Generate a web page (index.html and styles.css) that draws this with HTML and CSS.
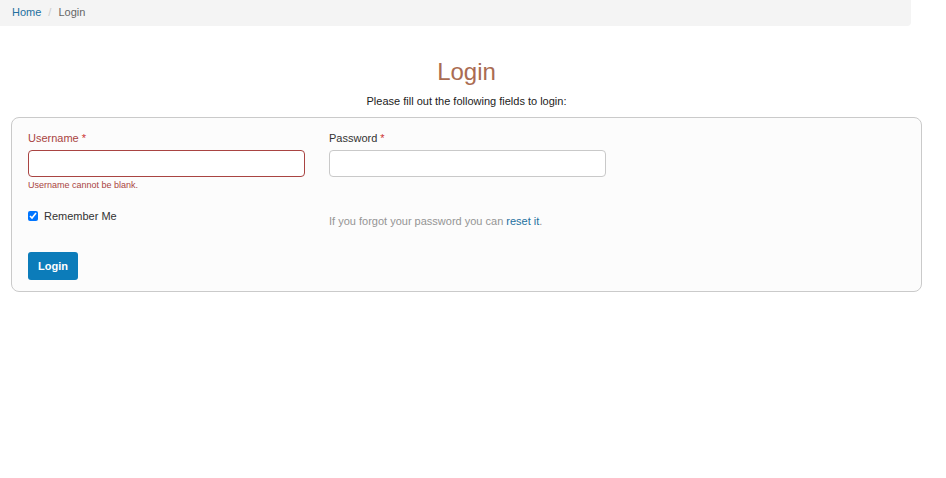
FILE: index.html
```html
<!DOCTYPE html>
<html lang="en">
<head>
    <meta charset="UTF-8">
    <title>Login</title>
    <link rel="stylesheet" href="styles.css">
</head>
<body>
    <ul class="breadcrumb">
        <li><a href="#">Home</a></li>
        <li class="active">Login</li>
    </ul>

    <div class="site-login">
        <h1>Login</h1>
        <p class="lead">Please fill out the following fields to login:</p>

        <form class="login-box">
            <div class="row">
                <div class="field has-error">
                    <label>Username <span class="req">*</span></label>
                    <input type="text">
                    <div class="help-block">Username cannot be blank.</div>
                </div>
                <div class="field">
                    <label>Password <span class="req">*</span></label>
                    <input type="password">
                </div>
            </div>
            <div class="row row-check">
                <div class="field">
                    <label class="check"><input type="checkbox" checked> Remember Me</label>
                </div>
                <div class="field">
                    <p class="forgot">If you forgot your password you can <a href="#">reset it</a>.</p>
                </div>
            </div>
            <button type="button" class="btn">Login</button>
        </form>
    </div>
</body>
</html>
```

FILE: styles.css
```css
body {
    font-family: 'Liberation Sans', Arial, sans-serif;
    font-size: 12px;
    color: #333;
    margin: 0;
    background: #fff;
}
a {
    color: #23709f;
    text-decoration: none;
}
.breadcrumb {
    list-style: none;
    margin: 0;
    padding: 5px 12px;
    width: 887px;
    height: 16px;
    background: #f4f4f4;
    border-bottom-right-radius: 4px;
    display: flex;
    font-size: 11px;
    line-height: 14px;
}
.breadcrumb li + li::before {
    content: "/";
    color: #ccc;
    padding: 0 7px;
}
.breadcrumb .active {
    color: #666;
}
.site-login {
    padding: 0 24px 0 11px;
}
.site-login h1 {
    margin: 32px 0 0;
    text-align: center;
    font-weight: normal;
    font-size: 24px;
    line-height: 28px;
    color: #aa6c52;
}
.lead {
    margin: 8px 0 0;
    text-align: center;
    font-size: 11px;
    line-height: 14px;
    color: #222;
}
.login-box {
    margin-top: 9px;
    border: 1px solid #cacaca;
    border-radius: 8px;
    background: #fcfcfc;
    padding: 13px 16px 11px;
}
.row {
    display: flex;
    gap: 24px;
}
.field {
    width: 277px;
}
.field label {
    display: block;
    font-size: 11px;
    line-height: 14px;
    color: #333;
    margin-bottom: 5px;
}
.req {
    color: #c33;
}
.field input[type=text],
.field input[type=password] {
    display: block;
    box-sizing: border-box;
    width: 277px;
    height: 27px;
    margin: 0;
    border: 1px solid #c9c9c9;
    border-radius: 4px;
    background: #fff;
}
.has-error label {
    color: #a94442;
}
.has-error input[type=text] {
    border-color: #a94442;
}
.help-block {
    font-size: 9px;
    line-height: 12px;
    margin-top: 2px;
    color: #a94442;
}
.row-check {
    margin-top: 18px;
}
.field label.check {
    display: flex;
    align-items: center;
    color: #333;
    font-size: 11px;
}
.check input {
    margin: 0 6px 0 0;
    width: 10px;
    height: 10px;
}
.forgot {
    margin: 5px 0 0;
    font-size: 11px;
    line-height: 14px;
    color: #959595;
}
.btn {
    margin-top: 24px;
    height: 28px;
    padding: 0 10px;
    border: none;
    border-radius: 3px;
    background: #0c7cba;
    color: #fff;
    font-family: 'Liberation Sans', Arial, sans-serif;
    font-size: 11px;
    font-weight: bold;
}
```
